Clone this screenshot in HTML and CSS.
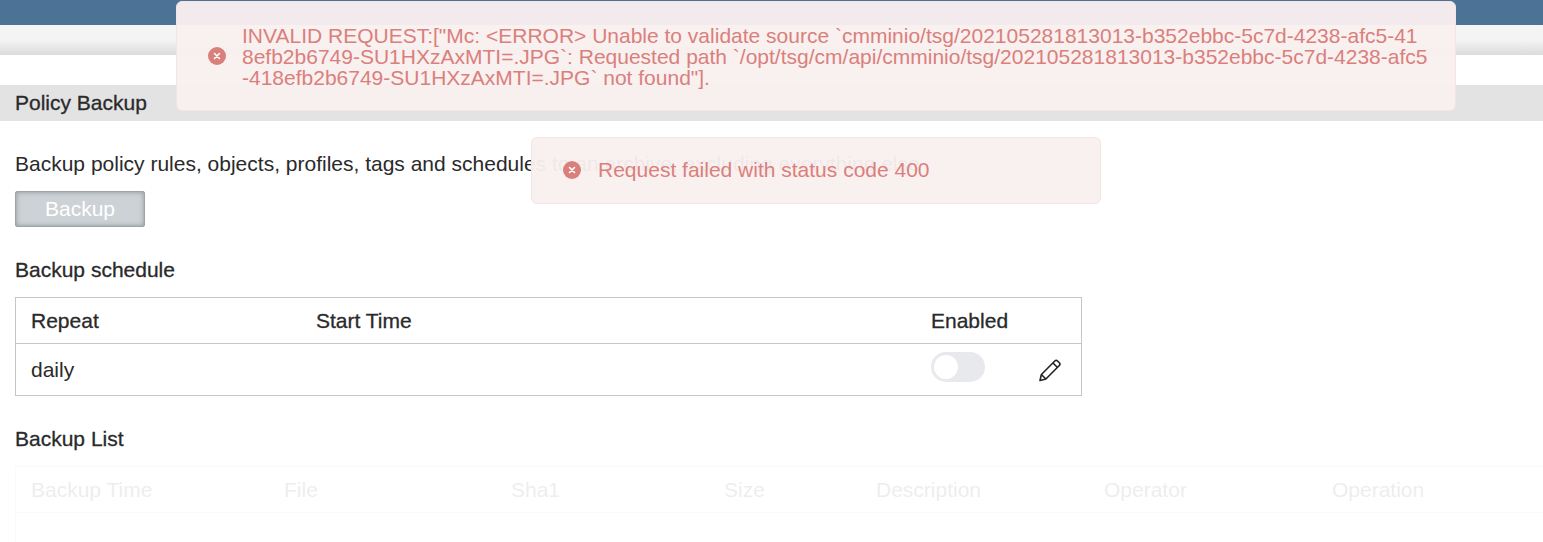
FILE: index.html
```html
<!DOCTYPE html>
<html lang="en">
<head>
  <meta charset="UTF-8">
  <title>Policy Backup</title>
  <link rel="stylesheet" href="styles.css">
</head>
<body>
  <div class="top-bar"></div>
  <div class="sub-bar"></div>
  <h1 class="page-title">Policy Backup</h1>
  <div class="content">
    <p class="intro">Backup policy rules, objects, profiles, tags and schedules to an archive, excluding everything else</p>
    <button class="backup-btn">Backup</button>
    <h2 class="section-title">Backup schedule</h2>
    <table class="schedule-table">
      <tr>
        <th class="col-repeat">Repeat</th>
        <th class="col-start">Start Time</th>
        <th class="col-enabled">Enabled</th>
        <th></th>
      </tr>
      <tr>
        <td>daily</td>
        <td></td>
        <td><span class="switch"><span class="switch-knob"></span></span></td>
        <td>
          <svg class="edit-icon" width="24" height="24" viewBox="0 0 24 24" fill="none" stroke="#222" stroke-width="1.6" stroke-linejoin="round">
            <path d="M2 22.5l1.4-6L16.8 3a2 2 0 0 1 2.8 0l1.7 1.7a2 2 0 0 1 0 2.8L7.9 21z"/>
            <path d="M15 5l4.5 4.5"/>
            <path d="M3.4 16.5l4.5 4.5"/>
          </svg>
        </td>
      </tr>
    </table>
    <h2 class="section-title list-title">Backup List</h2>
    <div class="list-table">
      <div class="list-head">
        <span class="list-col w-time">Backup Time</span>
        <span class="list-col w-file">File</span>
        <span class="list-col w-sha">Sha1</span>
        <span class="list-col w-size">Size</span>
        <span class="list-col w-desc">Description</span>
        <span class="list-col w-oper">Operator</span>
        <span class="list-col">Operation</span>
      </div>
    </div>
  </div>

  <div class="toast toast-large">
    <svg class="toast-icon" width="18" height="18" viewBox="0 0 18 18"><circle cx="9" cy="9" r="9" fill="#d9807c"/><path d="M6.5 6.5l5 5M11.5 6.5l-5 5" stroke="#fff" stroke-width="1.6" stroke-linecap="round"/></svg>
    <div class="toast-text">INVALID REQUEST:["Mc: &lt;ERROR&gt; Unable to validate source `cmminio/tsg/202105281813013-b352ebbc-5c7d-4238-afc5-418efb2b6749-SU1HXzAxMTI=.JPG`: Requested path `/opt/tsg/cm/api/cmminio/tsg/202105281813013-b352ebbc-5c7d-4238-afc5-418efb2b6749-SU1HXzAxMTI=.JPG` not found"].</div>
  </div>
  <div class="toast toast-small">
    <svg class="toast-icon" width="18" height="18" viewBox="0 0 18 18"><circle cx="9" cy="9" r="9" fill="#d9807c"/><path d="M6.5 6.5l5 5M11.5 6.5l-5 5" stroke="#fff" stroke-width="1.6" stroke-linecap="round"/></svg>
    <div class="toast-text">Request failed with status code 400</div>
  </div>
</body>
</html>
```

FILE: styles.css
```css
html, body {
  height: 100%;
}
body {
  margin: 0;
  font-family: "Liberation Sans", Arial, sans-serif;
  font-size: 21px;
  color: #2a2a2a;
  background-color: #fff;
  overflow: hidden;
}
.top-bar {
  height: 25px;
  background-color: #4c7396;
}
.sub-bar {
  height: 30px;
  background: linear-gradient(#f5f5f5 0%, #f3f3f3 50%, #dcdcdc 100%);
}
.page-title {
  margin: 30px 0 0;
  height: 36px;
  padding-left: 15px;
  line-height: 36px;
  font-size: 21px;
  font-weight: normal;
  -webkit-text-stroke: 0.3px #2a2a2a;
  background-color: #e3e3e3;
}
.content {
  padding: 0 0 0 15px;
}
.intro {
  margin: 31px 0 0;
  line-height: 24px;
  white-space: nowrap;
}
.backup-btn {
  display: block;
  margin-top: 15px;
  width: 130px;
  height: 36px;
  padding: 0;
  font-family: inherit;
  font-size: 21px;
  color: #fff;
  background-color: #ccd2d6;
  border: 1px solid #9da3a7;
  border-radius: 2px;
  box-shadow: inset 0 0 5px #8d9397;
}
.section-title {
  margin: 31px 0 0;
  font-size: 21px;
  line-height: 24px;
  font-weight: normal;
  -webkit-text-stroke: 0.3px #2a2a2a;
}
.schedule-table {
  margin-top: 15px;
  width: 1067px;
  border: 1px solid #c6c6c6;
  border-collapse: collapse;
  table-layout: fixed;
}
.schedule-table th {
  height: 44px;
  padding: 1px 0 0 15px;
  text-align: left;
  font-weight: normal;
  -webkit-text-stroke: 0.3px #2a2a2a;
  border-bottom: 1px solid #c6c6c6;
}
.schedule-table td {
  height: 51px;
  padding: 0 0 0 15px;
}
.col-repeat {
  width: 270px;
}
.col-start {
  width: 600px;
}
.col-enabled {
  width: 93px;
}
.switch {
  display: block;
  width: 54px;
  height: 30px;
  border-radius: 15px;
  background-color: #e8e9ed;
  position: relative;
  top: -3px;
}
.switch-knob {
  display: block;
  position: absolute;
  left: 3px;
  top: 3px;
  width: 24px;
  height: 24px;
  border-radius: 50%;
  background-color: #fff;
}
.edit-icon {
  display: block;
  margin-left: -1px;
}
.list-title {
  margin-top: 31px;
}
.list-table {
  margin-top: 15px;
  opacity: 0.08;
  border: 1px solid #ccc;
  border-right: none;
  border-bottom: none;
  height: 90px;
}
.list-head {
  display: flex;
  height: 45px;
  line-height: 46px;
  padding-left: 15px;
  border-bottom: 1px solid #ccc;
}
.w-time { width: 253px; }
.w-file { width: 227px; }
.w-sha { width: 213px; }
.w-size { width: 152px; }
.w-desc { width: 228px; }
.w-oper { width: 228px; }
.toast {
  position: absolute;
  display: flex;
  align-items: center;
  box-sizing: border-box;
  background-color: rgba(249, 239, 239, 0.96);
  border: 1px solid #f6e3e3;
  border-radius: 6px;
  color: #d9807c;
  line-height: 21px;
}
.toast-large {
  left: 176px;
  top: 1px;
  width: 1280px;
  height: 110px;
  padding: 0 26px 0 31px;
}
.toast-small {
  left: 531px;
  top: 137px;
  width: 570px;
  height: 67px;
  padding: 0 30px 2px 31px;
}
.toast-icon {
  flex: none;
  margin-right: 17px;
}
.toast-large .toast-icon {
  margin-right: 16px;
}
.toast-text {
  word-break: break-all;
}
```
